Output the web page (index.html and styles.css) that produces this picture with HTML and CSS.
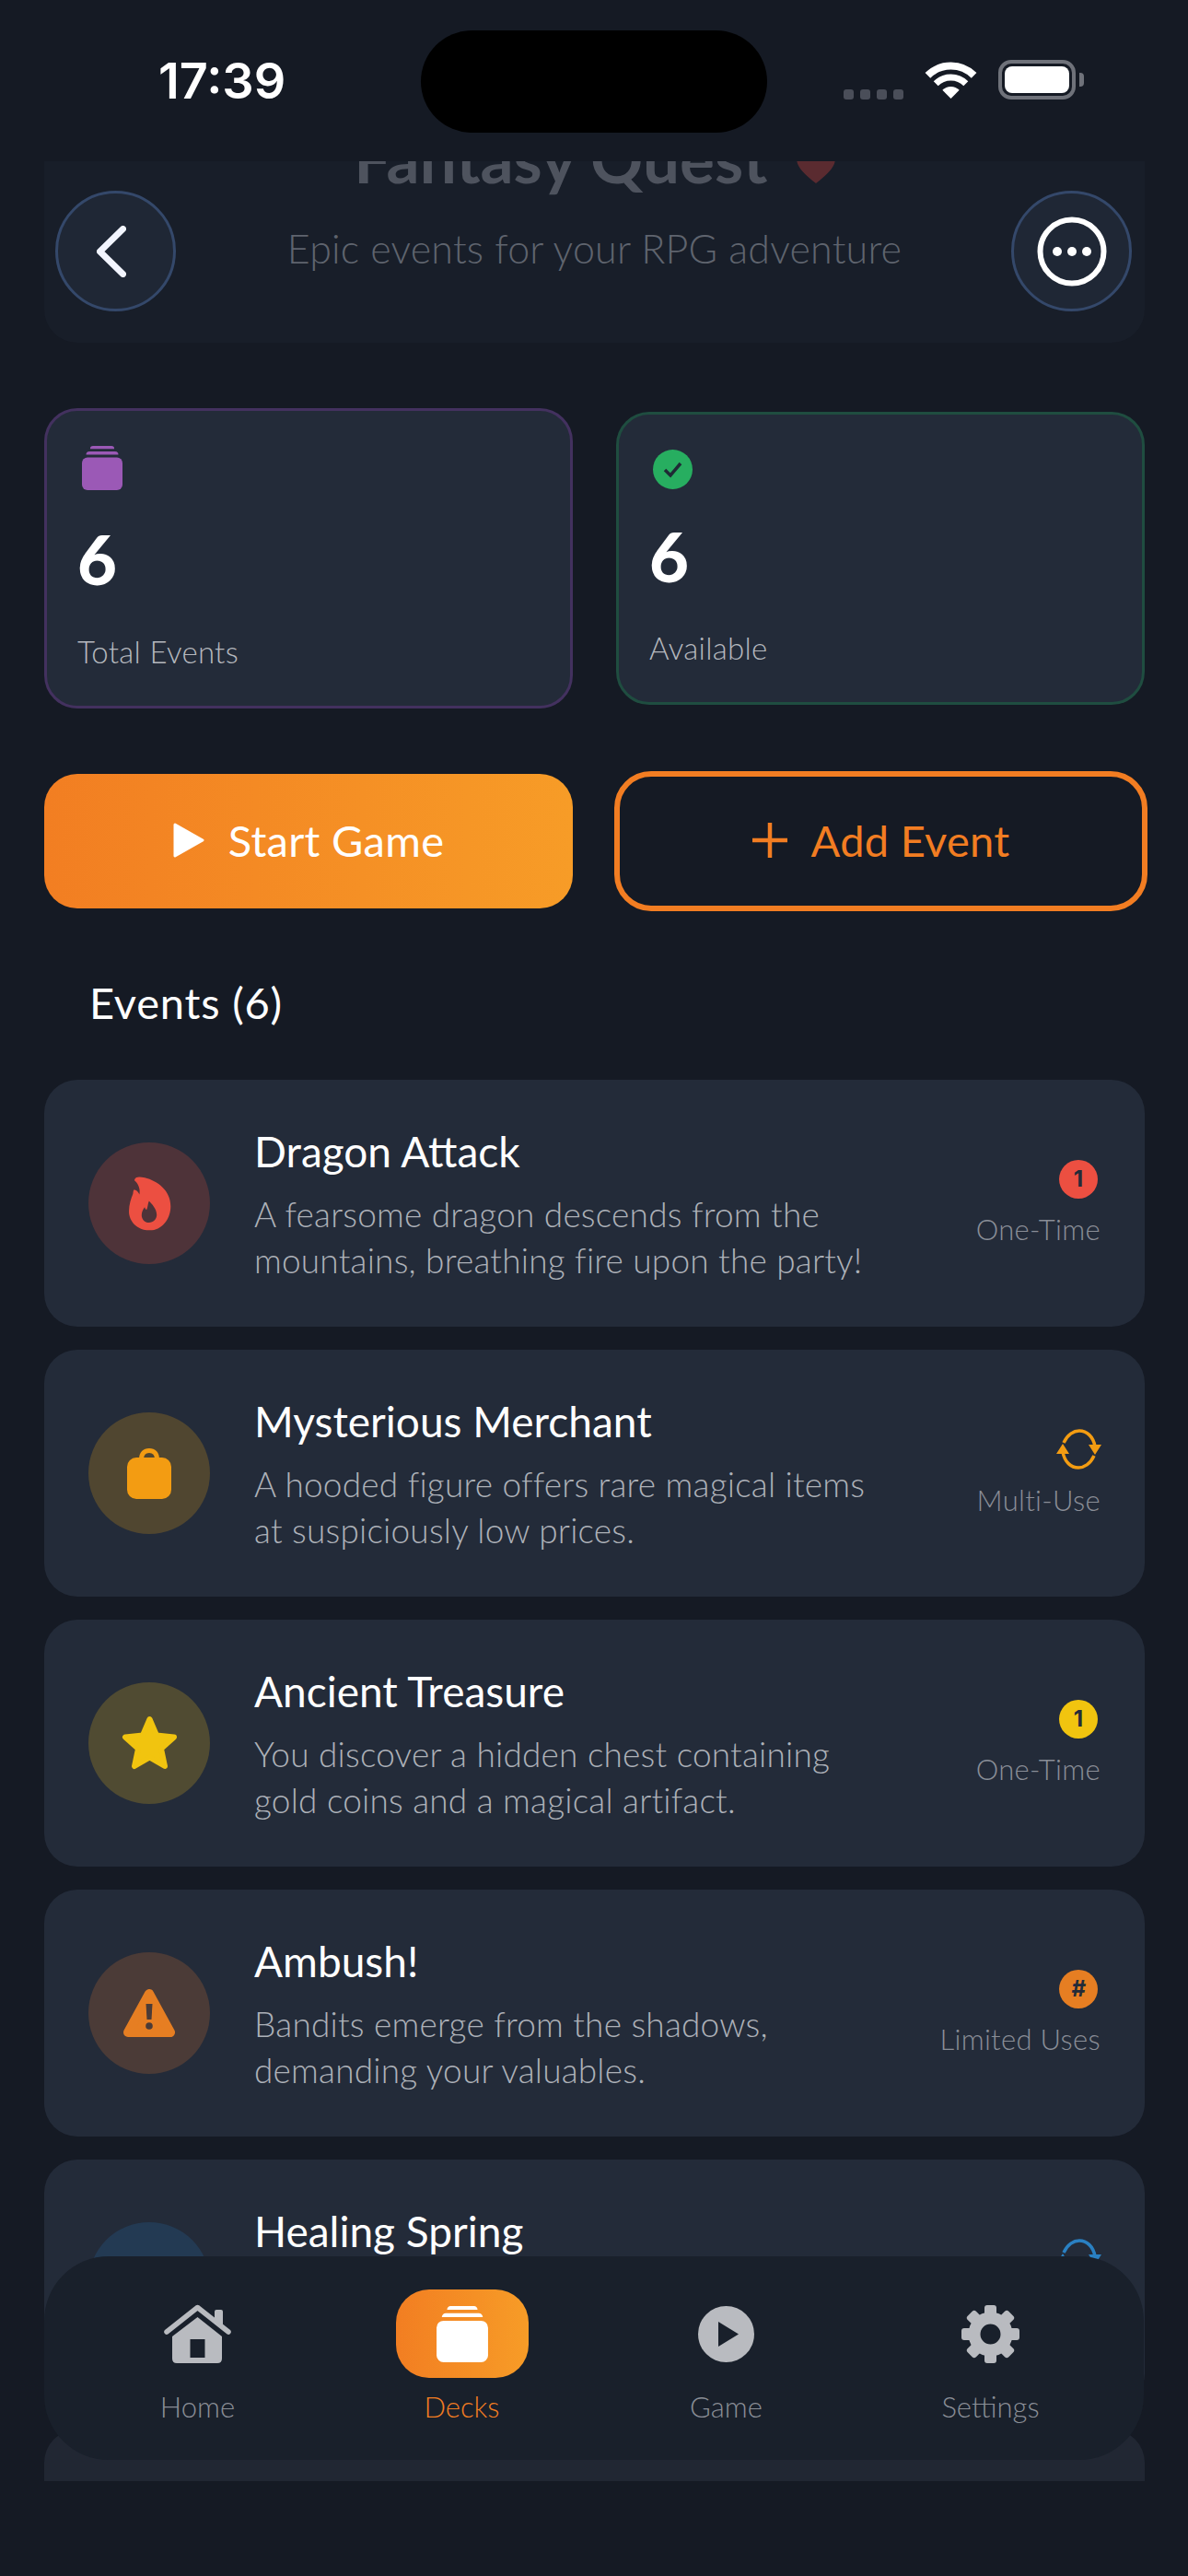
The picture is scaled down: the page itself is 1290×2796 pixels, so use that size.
FILE: index.html
```html
<!DOCTYPE html>
<html lang="en">

<head>
    <meta charset="UTF-8">
    <meta name="viewport" content="width=device-width, initial-scale=1.0">
    <title>Fantasy Quest</title>
    <link rel="stylesheet" href="styles.css">
</head>

<body>
    <svg class="defs" width="0" height="0">
        <symbol id="stack" viewBox="0 0 44 48">
            <path d="M9 3.200a3 3 0 0 1 3-3.200h20a3 3 0 0 1 3 3.200z" />
            <path d="M4.500 9.500a3.500 3.500 0 0 1 3.500-3.500h28a3.500 3.500 0 0 1 3.500 3.500z" />
            <rect x="0" y="12.500" width="44" height="35.500" rx="6" />
        </symbol>
    </svg>

    <div class="phone">
        <div class="status-bar">
            <div class="time">17:39</div>
            <div class="island"></div>
            <div class="status-icons">
                <div class="signal"><span></span><span></span><span></span><span></span></div>
                <svg class="wifi" width="57" height="42" viewBox="0 0 57 42" fill="none" stroke="#fff">
                    <path d="M28.500 41L19.300 31.800A13 13 0 0 1 37.700 31.800Z" fill="#fff" stroke="none" />
                    <path d="M12.200 24.700A23 23 0 0 1 44.800 24.700" stroke-width="7" />
                    <path d="M3.400 15.900A35.500 35.500 0 0 1 53.600 15.900" stroke-width="8" />
                </svg>
                <div class="battery">
                    <div class="battery-body"><div class="battery-fill"></div></div>
                    <div class="battery-nub"></div>
                </div>
            </div>
        </div>

        <div class="scroll">
            <div class="deck-header">
                <h1 class="deck-title">Fantasy Quest
                    <svg class="heart" width="42" height="38" viewBox="0 0 42 38">
                        <path d="M21 38C8 28 0 20 0 11 0 4 5 0 11 0c4 0 8 2 10 6 2-4 6-6 10-6 6 0 11 4 11 11 0 9-8 17-21 27z" />
                    </svg>
                </h1>
                <p class="deck-sub">Epic events for your RPG adventure</p>
            </div>

            <div class="stats">
                <div class="stat stat-total">
                    <div class="stat-icon stack-icon"><svg width="44" height="48"><use href="#stack" /></svg></div>
                    <div class="stat-num">6</div>
                    <div class="stat-label">Total Events</div>
                </div>
                <div class="stat stat-avail">
                    <div class="stat-icon">
                        <svg width="43" height="43" viewBox="0 0 43 43">
                            <circle cx="21.500" cy="21.500" r="21.500" fill="#27ae60" />
                            <path d="M13 22l6 6 11-13" fill="none" stroke="#1f2a35" stroke-width="3.500" />
                        </svg>
                    </div>
                    <div class="stat-num">6</div>
                    <div class="stat-label">Available</div>
                </div>
            </div>

            <div class="actions">
                <button class="btn btn-start">
                    <svg width="34" height="38" viewBox="0 0 34 38"><path d="M2 2L32 19 2 36z" fill="#fff" stroke="#fff" stroke-width="3" stroke-linejoin="round" /></svg>
                    Start Game
                </button>
                <button class="btn btn-add">
                    <svg width="38" height="38" viewBox="0 0 38 38"><path d="M19 0V38M0 19H38" stroke="#f27d22" stroke-width="4.500" /></svg>
                    Add Event
                </button>
            </div>

            <h2 class="section-title">Events (6)</h2>

            <div class="event-list">
                <div class="event">
                    <div class="event-icon icon-red">
                        <svg width="47" height="59" viewBox="54 54 140 176">
                            <path fill="#ec4f41" fill-rule="evenodd" d="M76 62C80 54 92 54 108 58C150 68 192 100 192 150C192 195 160 230 122 228C85 228 56 200 57 165C57 145 64 125 70 110C71 100 72 96 76 97C84 99 88 106 91 112C94 95 88 80 78 70C75 67 74 65 76 62ZM122 133C130 142 147 158 147 178C147 192 136 203 122 203C108 203 98 192 98 179C98 168 103 160 108 153C110 160 113 162 115 160C118 152 118 142 122 133Z" />
                        </svg>
                    </div>
                    <div class="event-text">
                        <div class="event-name">Dragon Attack</div>
                        <div class="event-desc">A fearsome dragon descends from the<br>mountains, breathing fire upon the party!</div>
                    </div>
                    <div class="event-type">
                        <div class="badge badge-red">1</div>
                        <div class="type-label">One-Time</div>
                    </div>
                </div>

                <div class="event">
                    <div class="event-icon icon-amber">
                        <svg width="48" height="55" viewBox="0 0 48 55">
                            <path d="M15.500 12C15.500 5.500 19 2.500 24 2.500S32.500 5.500 32.500 12" fill="none" stroke="#f39c12" stroke-width="5" />
                            <rect y="10" width="48" height="45" rx="10" fill="#f39c12" />
                        </svg>
                    </div>
                    <div class="event-text">
                        <div class="event-name">Mysterious Merchant</div>
                        <div class="event-desc">A hooded figure offers rare magical items<br>at suspiciously low prices.</div>
                    </div>
                    <div class="event-type">
                        <svg class="sync" width="49" height="44" viewBox="0 0 49 44" fill="none" stroke="#f39c12" stroke-width="3.500">
                            <path d="M8 15C12 6 19 2 25 2c8 0 15 6 17 17" />
                            <path d="M41 29C37 38 30 42 24 42 16 42 9 36 7 25" />
                            <path d="M35 17H49L42 28zM0 27H14L7 16z" fill="#f39c12" stroke="none" />
                        </svg>
                        <div class="type-label">Multi-Use</div>
                    </div>
                </div>

                <div class="event">
                    <div class="event-icon icon-yellow">
                        <svg width="61" height="60" viewBox="0 0 61 60">
                            <path d="M30.500 4L38 21.500 57 23.500 43 36 47 55 30.500 45.500 14 55 18 36 4 23.500 23 21.500z" fill="#f1c40f" stroke="#f1c40f" stroke-width="6" stroke-linejoin="round" />
                        </svg>
                    </div>
                    <div class="event-text">
                        <div class="event-name">Ancient Treasure</div>
                        <div class="event-desc">You discover a hidden chest containing<br>gold coins and a magical artifact.</div>
                    </div>
                    <div class="event-type">
                        <div class="badge badge-yellow">1</div>
                        <div class="type-label">One-Time</div>
                    </div>
                </div>

                <div class="event">
                    <div class="event-icon icon-orange">
                        <svg width="56" height="53" viewBox="0 0 56 53">
                            <path d="M28 5L51 47H5z" fill="#e67e22" stroke="#e67e22" stroke-width="10" stroke-linejoin="round" />
                            <path d="M24.500 16h7l-1 17h-5z" fill="#4b3b37" />
                            <circle cx="28" cy="40" r="3.800" fill="#4b3b37" />
                        </svg>
                    </div>
                    <div class="event-text">
                        <div class="event-name">Ambush!</div>
                        <div class="event-desc">Bandits emerge from the shadows,<br>demanding your valuables.</div>
                    </div>
                    <div class="event-type">
                        <div class="badge badge-orange"><i>#</i></div>
                        <div class="type-label">Limited Uses</div>
                    </div>
                </div>

                <div class="event">
                    <div class="event-icon icon-blue"></div>
                    <div class="event-text">
                        <div class="event-name">Healing Spring</div>
                        <div class="event-desc">Crystal waters restore the health<br>of the whole party.</div>
                    </div>
                    <div class="event-type">
                        <svg class="sync" width="49" height="44" viewBox="0 0 49 44" fill="none" stroke="#2a80c2" stroke-width="3.500">
                            <path d="M8 15C12 6 19 2 25 2c8 0 15 6 17 17" />
                            <path d="M41 29C37 38 30 42 24 42 16 42 9 36 7 25" />
                            <path d="M35 17H49L42 28zM0 27H14L7 16z" fill="#2a80c2" stroke="none" />
                        </svg>
                        <div class="type-label">Multi-Use</div>
                    </div>
                </div>

                <div class="event"></div>
            </div>
        </div>

        <button class="round-btn back-btn">
            <svg width="32" height="56" viewBox="0 0 32 56"><path d="M28.500 3.500L3.500 28 28.500 52.500" fill="none" stroke="#f2f5ff" stroke-width="7" stroke-linecap="round" stroke-linejoin="round" /></svg>
        </button>
        <button class="round-btn more-btn">
            <svg width="76" height="76" viewBox="0 0 76 76">
                <circle cx="38" cy="38" r="34.500" fill="none" stroke="#fff" stroke-width="6" />
                <circle cx="22" cy="38" r="5" fill="#fff" />
                <circle cx="38" cy="38" r="5" fill="#fff" />
                <circle cx="54" cy="38" r="5" fill="#fff" />
            </svg>
        </button>

        <nav class="tabbar">
            <div class="tab">
                <div class="tab-icon">
                    <svg width="73" height="64" viewBox="0 0 73 64">
                        <path d="M55 8q0-2 2-2h5q2 0 2 2v14h-9z" fill="#b9bbc0" />
                        <path d="M3 30L36.500 3.500 70 30" fill="none" stroke="#b9bbc0" stroke-width="5.500" stroke-linecap="round" stroke-linejoin="round" />
                        <path fill="#b9bbc0" fill-rule="evenodd" d="M36.500 14L63 35V59q0 5-5 5H14q-5 0-5-5V35zM28.500 38V58H44.500V38z" />
                    </svg>
                </div>
                <div class="tab-label">Home</div>
            </div>
            <div class="tab tab-active">
                <div class="tab-icon tab-pill"><svg width="56" height="61"><use href="#stack" /></svg></div>
                <div class="tab-label">Decks</div>
            </div>
            <div class="tab">
                <div class="tab-icon">
                    <svg width="61" height="61" viewBox="0 0 61 61">
                        <circle cx="30.500" cy="30.500" r="30.500" fill="#b9bbc0" />
                        <path d="M22 17L44 30.500 22 44z" fill="#19202b" />
                    </svg>
                </div>
                <div class="tab-label">Game</div>
            </div>
            <div class="tab">
                <div class="tab-icon">
                    <svg width="63" height="63" viewBox="0 0 63 63" fill="#b9bbc0">
                        <circle cx="31.500" cy="31.500" r="17.500" fill="none" stroke="#b9bbc0" stroke-width="13" />
                        <rect x="25" y="0" width="13" height="14" rx="3" />
                        <rect x="25" y="0" width="13" height="14" rx="3" transform="rotate(45 31.500 31.500)" />
                        <rect x="25" y="0" width="13" height="14" rx="3" transform="rotate(90 31.500 31.500)" />
                        <rect x="25" y="0" width="13" height="14" rx="3" transform="rotate(135 31.500 31.500)" />
                        <rect x="25" y="0" width="13" height="14" rx="3" transform="rotate(180 31.500 31.500)" />
                        <rect x="25" y="0" width="13" height="14" rx="3" transform="rotate(225 31.500 31.500)" />
                        <rect x="25" y="0" width="13" height="14" rx="3" transform="rotate(270 31.500 31.500)" />
                        <rect x="25" y="0" width="13" height="14" rx="3" transform="rotate(315 31.500 31.500)" />
                    </svg>
                </div>
                <div class="tab-label">Settings</div>
            </div>
        </nav>
    </div>
</body>

</html>
```

FILE: styles.css
```css
* {
    box-sizing: border-box;
}

body {
    margin: 0;
    background-color: #151a24;
    font-family: 'Lato', 'Open Sans', sans-serif;
    color: white;
}

.defs {
    position: absolute;
}

.phone {
    position: relative;
    width: 1290px;
    height: 2796px;
    overflow: hidden;
    background-color: #151a24;
}

/* status bar */
.status-bar {
    display: grid;
    grid-template-columns: 457px 376px 1fr;
    height: 175px;
    padding-top: 33px;
}

.time {
    padding-left: 172px;
    padding-top: 23px;
    font-family: 'Inter', sans-serif;
    font-size: 54px;
    line-height: 64px;
    font-weight: 600;
}

.island {
    height: 111px;
    background-color: black;
    border-radius: 56px;
}

.status-icons {
    display: flex;
    align-items: flex-end;
    height: 75px;
    padding-left: 83px;
}

.signal {
    display: flex;
    gap: 7px;
}

.signal span {
    width: 11px;
    height: 11px;
    border-radius: 3px;
    background-color: #4a4e59;
}

.wifi {
    margin-left: 23px;
}

.battery {
    display: flex;
    align-items: center;
    margin-left: 23px;
}

.battery-body {
    width: 84px;
    height: 43px;
    padding: 3px;
    border: 4px solid #6f727a;
    border-radius: 14px;
}

.battery-fill {
    height: 100%;
    background-color: white;
    border-radius: 8px;
}

.battery-nub {
    width: 5px;
    height: 15px;
    margin-left: 4px;
    background-color: #6f727a;
    border-radius: 0 4px 4px 0;
}

/* scrolling content */
.scroll {
    height: 2518px;
    padding: 0 47px 0 48px;
    overflow: hidden;
}

.deck-header {
    height: 277px;
    margin-top: -80px;
    padding-top: 41px;
    background-color: #181e29;
    border-radius: 36px;
    text-align: center;
}

.deck-title {
    margin: 0;
    font-size: 71px;
    line-height: 72px;
    font-weight: 700;
    color: #4e535e;
}

.heart {
    margin-left: 14px;
    fill: #5a2b30;
}

.deck-sub {
    margin: 36px 0 0;
    font-size: 43px;
    line-height: 52px;
    font-weight: 300;
    letter-spacing: 0.2px;
    color: #5f646e;
}

.stats {
    display: grid;
    grid-template-columns: 574px 574px;
    gap: 47px;
    align-items: center;
    margin-top: 71px;
}

.stat {
    padding: 38px 33px 0;
    background-color: #232b39;
    border: 3px solid;
    border-radius: 36px;
}

.stat-total {
    height: 326px;
    border-color: #43315f;
}

.stat-avail {
    height: 318px;
    border-color: #1f4d40;
}

.stat-avail .stat-num {
    margin-top: 31px;
}

.stat-avail .stat-label {
    margin-top: 37px;
}

.stat-icon {
    height: 43px;
    padding-left: 4px;
}

.stack-icon {
    height: 48px;
    padding-left: 5px;
    fill: #9b59b6;
}

.stat-num {
    margin-top: 33px;
    font-size: 74px;
    line-height: 84px;
    font-weight: 900;
}

.stat-label {
    margin-top: 38px;
    font-size: 33px;
    line-height: 40px;
    font-weight: 300;
    letter-spacing: 0.3px;
    color: #b5b8be;
}

.actions {
    display: grid;
    grid-template-columns: 574px 579px;
    gap: 45px;
    align-items: center;
    margin-top: 68px;
}

.btn {
    display: flex;
    align-items: center;
    justify-content: center;
    gap: 26px;
    padding-bottom: 4px;
    font-family: inherit;
    font-size: 47px;
    font-weight: 400;
    letter-spacing: 0.3px;
    border-radius: 36px;
}

.btn-start {
    height: 146px;
    color: white;
    background: linear-gradient(90deg, #f27e22, #f79c27);
    border: none;
}

.btn-add {
    height: 152px;
    color: #f27d22;
    background: transparent;
    border: 6px solid #f27d22;
    border-radius: 40px;
}

.section-title {
    margin: 73px 0 58px;
    padding-left: 49px;
    font-size: 47px;
    line-height: 52px;
    font-weight: 400;
    letter-spacing: 0.8px;
}

.event-list {
    display: flex;
    flex-direction: column;
    gap: 25px;
}

.event {
    display: flex;
    align-items: center;
    flex-shrink: 0;
    height: 268px;
    padding: 0 48px;
    background-color: #232b39;
    border-radius: 36px;
}

.event:last-child {
    background-color: #212733;
}

.event-icon {
    display: flex;
    align-items: center;
    justify-content: center;
    flex-shrink: 0;
    width: 132px;
    height: 132px;
    margin-right: 48px;
    border-radius: 50%;
}

.icon-red { background-color: #4e3339; }
.icon-amber { background-color: #504630; }
.icon-yellow { background-color: #504b32; }
.icon-orange { background-color: #4b3b37; }
.icon-blue { background-color: #233a53; }

.event-text {
    flex: 1;
    padding-top: 3px;
}

.event-name {
    font-size: 46px;
    line-height: 54px;
    font-weight: 400;
}

.event-desc {
    margin-top: 16px;
    font-size: 37px;
    line-height: 50px;
    font-weight: 300;
    letter-spacing: 0.2px;
    color: #adb1b8;
}

.event-type {
    display: flex;
    flex-direction: column;
    align-items: flex-end;
}

.badge {
    width: 42px;
    height: 42px;
    margin-right: 3px;
    border-radius: 50%;
    font-family: 'Inter', sans-serif;
    font-size: 24px;
    line-height: 42px;
    font-weight: 700;
    text-align: center;
    color: #232b39;
}

.badge-red { background-color: #ec4f41; }
.badge-yellow { background-color: #f1c40f; }
.badge-orange { background-color: #e67e22; }

.sync {
    margin-right: -1px;
}

.type-label {
    margin-top: 13px;
    font-size: 31px;
    line-height: 40px;
    font-weight: 300;
    letter-spacing: 0.3px;
    color: #8a8e97;
}

/* overlays */
.round-btn {
    position: absolute;
    top: 207px;
    display: flex;
    align-items: center;
    justify-content: center;
    width: 131px;
    height: 131px;
    padding: 0;
    background-color: #1f2735;
    border: 3px solid #34486a;
    border-radius: 50%;
}

.back-btn {
    left: 60px;
    padding-right: 9px;
}

.more-btn {
    left: 1098px;
}

.tabbar {
    position: absolute;
    top: 2449px;
    left: 48px;
    display: grid;
    grid-template-columns: repeat(4, 1fr);
    width: 1194px;
    height: 221px;
    padding: 36px 23px 0;
    background-color: #19202b;
    border-radius: 70px;
}

.tab {
    display: flex;
    flex-direction: column;
    align-items: center;
}

.tab-icon {
    display: flex;
    align-items: center;
    justify-content: center;
    width: 144px;
    height: 96px;
}

.tab-pill {
    background: linear-gradient(90deg, #f27e22, #f79c27);
    border-radius: 36px;
    fill: white;
}

.tab-label {
    margin-top: 12px;
    font-size: 31px;
    line-height: 38px;
    font-weight: 300;
    color: #8a8e96;
}

.tab-active .tab-label {
    color: #f27d22;
}
```
